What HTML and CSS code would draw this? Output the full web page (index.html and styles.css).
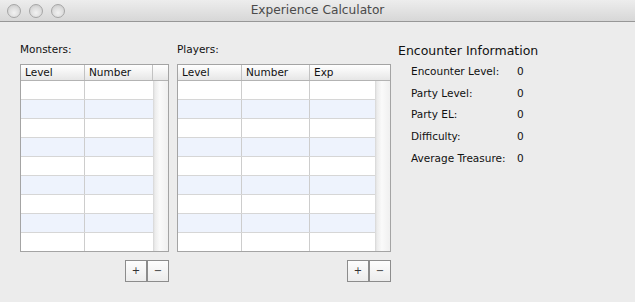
FILE: index.html
```html
<!DOCTYPE html>
<html lang="en">

<head>
    <meta charset="UTF-8">
    <title>Experience Calculator</title>
    <link rel="stylesheet" href="styles.css">
</head>

<body>
    <div class="window">
        <!-- title bar -->
        <div class="titlebar">
            <div class="lights">
                <span class="light"></span>
                <span class="light"></span>
                <span class="light"></span>
            </div>
            <div class="title">Experience Calculator</div>
        </div>

        <div class="content">
            <!-- Monsters -->
            <div class="panel monsters">
                <div class="label">Monsters:</div>
                <div class="table">
                    <div class="thead">
                        <div class="th c-level">Level</div>
                        <div class="th c-number">Number</div>
                        <div class="th c-corner"></div>
                    </div>
                    <div class="tbody">
                        <div class="rows">
                            <div class="row"><div class="td c-level"></div><div class="td c-number"></div></div>
                            <div class="row"><div class="td c-level"></div><div class="td c-number"></div></div>
                            <div class="row"><div class="td c-level"></div><div class="td c-number"></div></div>
                            <div class="row"><div class="td c-level"></div><div class="td c-number"></div></div>
                            <div class="row"><div class="td c-level"></div><div class="td c-number"></div></div>
                            <div class="row"><div class="td c-level"></div><div class="td c-number"></div></div>
                            <div class="row"><div class="td c-level"></div><div class="td c-number"></div></div>
                            <div class="row"><div class="td c-level"></div><div class="td c-number"></div></div>
                            <div class="row"><div class="td c-level"></div><div class="td c-number"></div></div>
                        </div>
                        <div class="scroll"></div>
                    </div>
                </div>
                <div class="buttons">
                    <button class="btn">+</button><button class="btn">−</button>
                </div>
            </div>

            <!-- Players -->
            <div class="panel players">
                <div class="label">Players:</div>
                <div class="table">
                    <div class="thead">
                        <div class="th c-level">Level</div>
                        <div class="th c-number">Number</div>
                        <div class="th c-exp-head">Exp</div>
                    </div>
                    <div class="tbody">
                        <div class="rows">
                            <div class="row"><div class="td c-level"></div><div class="td c-number"></div><div class="td c-exp"></div></div>
                            <div class="row"><div class="td c-level"></div><div class="td c-number"></div><div class="td c-exp"></div></div>
                            <div class="row"><div class="td c-level"></div><div class="td c-number"></div><div class="td c-exp"></div></div>
                            <div class="row"><div class="td c-level"></div><div class="td c-number"></div><div class="td c-exp"></div></div>
                            <div class="row"><div class="td c-level"></div><div class="td c-number"></div><div class="td c-exp"></div></div>
                            <div class="row"><div class="td c-level"></div><div class="td c-number"></div><div class="td c-exp"></div></div>
                            <div class="row"><div class="td c-level"></div><div class="td c-number"></div><div class="td c-exp"></div></div>
                            <div class="row"><div class="td c-level"></div><div class="td c-number"></div><div class="td c-exp"></div></div>
                            <div class="row"><div class="td c-level"></div><div class="td c-number"></div><div class="td c-exp"></div></div>
                        </div>
                        <div class="scroll"></div>
                    </div>
                </div>
                <div class="buttons">
                    <button class="btn">+</button><button class="btn">−</button>
                </div>
            </div>

            <!-- Encounter info -->
            <div class="info">
                <div class="info-title">Encounter Information</div>
                <div class="info-row"><span class="info-label">Encounter Level:</span><span>0</span></div>
                <div class="info-row"><span class="info-label">Party Level:</span><span>0</span></div>
                <div class="info-row"><span class="info-label">Party EL:</span><span>0</span></div>
                <div class="info-row"><span class="info-label">Difficulty:</span><span>0</span></div>
                <div class="info-row"><span class="info-label">Average Treasure:</span><span>0</span></div>
            </div>
        </div>
    </div>
</body>

</html>
```

FILE: styles.css
```css
body {
    margin: 0;
    padding: 0;
    background-color: #ececec;
    font-family: "DejaVu Sans", Verdana, sans-serif;
    font-size: 10.5px;
    color: #111;
}

.window {
    width: 635px;
    height: 302px;
    overflow: hidden;
}

/* Title bar */
.titlebar {
    height: 21px;
    border-bottom: 1px solid #979797;
    background: linear-gradient(to bottom, #ededed, #d7d7d7);
    display: flex;
    align-items: center;
    position: relative;
}
.lights {
    display: flex;
    gap: 8px;
    padding-left: 7px;
}
.light {
    width: 12px;
    height: 12px;
    border-radius: 50%;
    border: 1px solid #a6a6a6;
    background: radial-gradient(circle at 50% 65%, #f2f2f2 0, #dedede 50%, #c4c4c4 100%);
}
.title {
    position: absolute;
    left: 0;
    right: 0;
    text-align: center;
    font-size: 12.2px;
    color: #4a4a4a;
    line-height: 21px;
}

/* Main area */
.content {
    display: flex;
    align-items: flex-start;
    padding: 20px 0 0 20px;
}
.panel {
    display: flex;
    flex-direction: column;
}
.players {
    margin-left: 8px;
}
.label {
    line-height: 14px;
    height: 14px;
    margin-bottom: 8px;
}

/* Tables */
.table {
    border: 1px solid #a4a4a4;
    background: #fff;
}
.monsters .table {
    width: 147px;
}
.players .table {
    width: 212px;
}
.thead {
    display: flex;
    height: 15px;
    border-bottom: 1px solid #b3b3b3;
    background: linear-gradient(to bottom, #ffffff, #f3f3f3 50%, #e6e6e6);
}
.th {
    line-height: 15px;
    padding-left: 4px;
    box-sizing: border-box;
    border-right: 1px solid #c2c2c2;
}
.tbody {
    display: flex;
}
.rows {
    flex: 1;
}
.row {
    display: flex;
    height: 18px;
    border-bottom: 1px solid #d6d6d6;
}
.row:last-child {
    border-bottom: none;
}
.row:nth-child(even) {
    background: #eef3fd;
}
.td {
    box-sizing: border-box;
    border-right: 1px solid #cdcdcd;
}
.c-level {
    width: 64px;
}
.c-number {
    width: 68px;
}
.c-corner {
    width: 15px;
    border-right: none;
}
.c-exp-head {
    width: 80px;
    border-right: none;
}
.c-exp {
    width: 65px;
    border-right: none;
}
.monsters .td.c-number {
    border-right: none;
}
.scroll {
    width: 15px;
    background: linear-gradient(to right, #d6d6d6 0, #ececec 2px, #fafafa 45%, #f0f0f0 100%);
}

/* +/- buttons */
.buttons {
    display: flex;
    justify-content: flex-end;
    margin-top: 8px;
}
.btn {
    width: 22px;
    height: 22px;
    padding: 0;
    margin: 0;
    border: 1px solid #8c8c8c;
    background: linear-gradient(to bottom, #fdfdfd, #ececec);
    font-family: "DejaVu Sans", sans-serif;
    font-size: 10px;
    line-height: 18px;
    color: #333;
}

/* Encounter info */
.info {
    margin-left: 7px;
    margin-top: 1px;
}
.info-title {
    font-size: 12.5px;
    line-height: 16px;
    margin-bottom: 2px;
}
.info-row {
    display: flex;
    padding-left: 13px;
    line-height: 21.7px;
    height: 21.7px;
}
.info-label {
    width: 106px;
}
```
